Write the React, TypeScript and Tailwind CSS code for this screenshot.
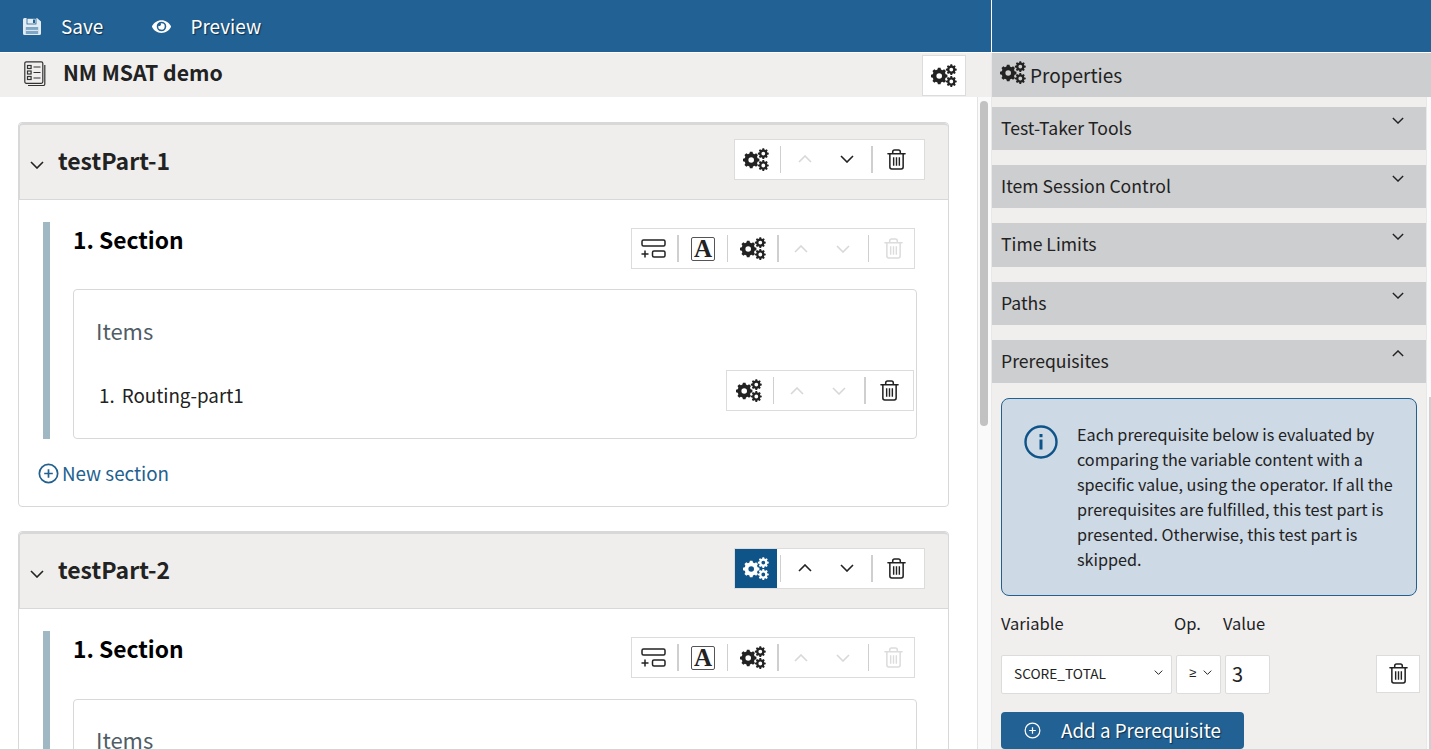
import { FaEye } from 'react-icons/fa'

// builds one toothed wheel as an svg path, with a round hole in the middle
function gearPath(cx: number, cy: number, outer: number, root: number, hole: number, teeth: number) {
  const step = (Math.PI * 2) / teeth
  let d = ''
  for (let i = 0; i < teeth; i++) {
    const a = i * step
    const pts: [number, number][] = [
      [root, a - step * 0.34],
      [outer, a - step * 0.2],
      [outer, a + step * 0.2],
      [root, a + step * 0.34],
    ]
    for (const [r, t] of pts) {
      d += `${i === 0 && r === root && t < a ? 'M' : 'L'}${(cx + r * Math.cos(t)).toFixed(2)} ${(cy + r * Math.sin(t)).toFixed(2)}`
    }
  }
  d += `Z M${cx - hole} ${cy}a${hole} ${hole} 0 1 0 ${hole * 2} 0a${hole} ${hole} 0 1 0 ${-hole * 2} 0Z`
  return d
}

const gearsD = [
  gearPath(8.2, 12, 8.3, 6.7, 2.8, 8),
  gearPath(20.3, 5.6, 5.5, 4.2, 1.9, 8),
  gearPath(20.3, 17.5, 5.5, 4.2, 1.9, 8),
].join(' ')

function Gears({ className = '' }: { className?: string }) {
  return (
    <svg viewBox="0 0 26 23" className={`h-[23px] w-[26px] ${className}`} fill="currentColor" fillRule="evenodd">
      <path d={gearsD} />
    </svg>
  )
}

function SaveIcon() {
  return (
    <svg viewBox="0 0 18 17" className="ml-[23px] h-[17px] w-[18px]">
      <path d="M1.5 0H14l4 3.5V15.5A1.5 1.5 0 0 1 16.5 17H1.5A1.5 1.5 0 0 1 0 15.5V1.5A1.5 1.5 0 0 1 1.5 0Z" fill="#e4ecf3" />
      <rect x="4" y="0.5" width="9" height="5.5" fill="#e4ecf3" stroke="#226193" strokeWidth="0.8" />
      <rect x="10" y="1.5" width="2" height="3.5" fill="#226193" />
      <rect x="2.8" y="9" width="12.4" height="7" fill="#7fa6c4" />
      <path d="M2.8 12.4h12.4" stroke="#e4ecf3" strokeWidth="1" />
    </svg>
  )
}

function Trash({ className = '' }: { className?: string }) {
  return (
    <svg viewBox="0 0 20 22" className={`h-[21px] w-[19px] ${className}`} fill="none" stroke="currentColor" strokeWidth="1.6">
      <path d="M1 5h18" strokeLinecap="round" />
      <path d="M6 5V3a2 2 0 0 1 2-2h4a2 2 0 0 1 2 2v2" />
      <path d="M3 5v14a2 2 0 0 0 2 2h10a2 2 0 0 0 2-2V5" />
      <path d="M7 8.5v9M10 8.5v9M13 8.5v9" strokeWidth="1.5" />
    </svg>
  )
}

function Chevron({ up = false, className = 'h-[8px] w-[14px]' }: { up?: boolean; className?: string }) {
  return (
    <svg viewBox="0 0 14 8" className={className} fill="none" stroke="currentColor" strokeWidth="1.6">
      <path d={up ? 'M1 7l6-6 6 6' : 'M1 1l6 6 6-6'} />
    </svg>
  )
}

function AddSectionIcon() {
  return (
    <svg viewBox="0 0 25 19" className="h-[19px] w-[25px] text-[#222]" fill="none" stroke="currentColor" strokeWidth="1.5">
      <rect x="1" y="1" width="23" height="6" rx="1.5" />
      <rect x="11.5" y="12" width="12.5" height="6" rx="1.5" />
      <path d="M0.5 15h7M4 11.5v7" />
    </svg>
  )
}

function ToolbarSep({ className }: { className: string }) {
  return <div className={`h-[27px] bg-[#cfcfcf] ${className}`} />
}

function PartToolbar({ active = false, upEnabled = true, small = false }: { active?: boolean; upEnabled?: boolean; small?: boolean }) {
  return (
    <div className={`flex h-[41px] items-center border border-[#dcdcdc] bg-white ${small ? 'w-[188px]' : 'w-[191px]'}`}>
      <div className={`flex h-full items-center justify-center ${small ? 'w-[43px]' : 'w-[42px]'} ${active ? 'bg-[#0f5489] text-white' : 'text-[#222]'}`}>
        <Gears />
      </div>
      <ToolbarSep className="ml-[3px] w-px" />
      <div className={`flex w-[42px] justify-center ${small ? 'ml-[2px]' : 'ml-[3px]'} ${upEnabled ? 'text-[#222]' : 'text-[#d8d8d8]'}`}>
        <Chevron up />
      </div>
      <div className={`flex w-[42px] justify-center ${small ? 'text-[#d8d8d8]' : 'text-[#222]'}`}>
        <Chevron />
      </div>
      <ToolbarSep className={small ? 'ml-[4px] w-[2px]' : 'ml-[3px] w-[2px]'} />
      <div className="flex w-[46px] justify-center text-[#222]">
        <Trash />
      </div>
    </div>
  )
}

function SectionToolbar() {
  return (
    <div className="flex h-[41px] w-[284px] items-center border border-[#dcdcdc] bg-white text-[#222]">
      <div className="flex w-[43px] justify-center">
        <AddSectionIcon />
      </div>
      <ToolbarSep className="ml-[2px] w-[2px]" />
      <div className="flex w-[48px] justify-center">
        <div className="flex h-[24px] w-[24px] items-center justify-center rounded-[2px] border border-[#555] font-['Liberation_Serif',serif] text-[25px] leading-none font-bold">
          A
        </div>
      </div>
      <ToolbarSep className="w-px" />
      <div className="flex w-[49px] justify-center">
        <Gears />
      </div>
      <ToolbarSep className="w-[2px]" />
      <div className="flex w-[44px] justify-center text-[#d8d8d8]">
        <Chevron up />
      </div>
      <div className="flex w-[40px] justify-center text-[#d8d8d8]">
        <Chevron />
      </div>
      <ToolbarSep className="ml-[5px] w-px" />
      <div className="flex w-[45px] justify-center pl-[3px] text-[#dcdcdc]">
        <Trash />
      </div>
    </div>
  )
}

function TestPart({ name, active = false, upEnabled = true, full = false }: { name: string; active?: boolean; upEnabled?: boolean; full?: boolean }) {
  return (
    <div className="w-[931px] shrink-0 rounded-[4px] border border-[#d8d8d8] bg-white">
      <div className="flex h-[77px] items-center rounded-t-[4px] border-t-2 border-b border-l border-[#d8d8d8] bg-[#efeeed] pr-[23px] pl-[10px]">
        <Chevron className="mt-[5px] h-[8px] w-[14px] text-[#222]" />
        <h2 className="mb-[5px] ml-[14px] text-[23px] leading-[32px] font-semibold text-[#222]">{name}</h2>
        <div className="mb-[6px] ml-auto">
          <PartToolbar active={active} upEnabled={upEnabled} />
        </div>
      </div>
      <div className="pt-[22px] pb-[19px]">
        <div className="ml-[24px] border-l-[7px] border-[#a0b8c3] pl-[23px]">
          <div className={`flex items-start justify-between pr-[33px] ${full ? 'h-[67px]' : 'h-[68px]'}`}>
            <h3 className="text-[22.8px] leading-[35px] font-semibold text-black">1. Section</h3>
            <div className="mt-[6px]">
              <SectionToolbar />
            </div>
          </div>
          <div className={`mr-[31px] h-[150px] rounded-[4px] border border-[#d8d8d8] pl-[22px] ${full ? 'pt-[25px]' : 'pt-[24px]'}`}>
            <div className="text-[22px] leading-[30px] text-[#4f5d66]">Items</div>
            <div className="mt-[25px] flex h-[41px] items-center justify-between pr-[2px]">
              <div className="pt-[8px] pl-[3px] text-[18.8px] leading-[26px] text-[#222]">
                <span className="mr-[7px]">1.</span>Routing-part1
              </div>
              {full && <PartToolbar small upEnabled={false} />}
            </div>
          </div>
        </div>
        <div className="mt-[20px] ml-[19px] flex h-[28px] items-center gap-[3px] text-[18.8px] text-[#22618f]">
          <svg viewBox="0 0 22 22" className="h-[21px] w-[21px]" fill="none" stroke="currentColor" strokeWidth="1.8">
            <circle cx="11" cy="11" r="9.6" />
            <path d="M6.5 11h9M11 6.5v9" />
          </svg>
          New section
        </div>
      </div>
    </div>
  )
}

function AccordionHeader({ title, open = false }: { title: string; open?: boolean }) {
  return (
    <div className="flex h-[43.2px] justify-between bg-[#cdced0] pr-[22px] pl-[9px] text-[17.6px] leading-[42px] text-[#222]">
      {title}
      <Chevron up={open} className="mt-[10px] h-[7px] w-[12px]" />
    </div>
  )
}

export default function App() {
  return (
    <div className="flex h-[750px] w-[1431px] flex-col overflow-hidden border-b border-[#d4d4d4] bg-white font-['Noto_Sans_CJK_SC','Noto_Sans',sans-serif]">
      <header className="flex h-[52px] shrink-0 bg-[#226193] text-[19px] text-white [text-shadow:1px_1px_1px_#0a3050]">
        <div className="flex w-[991px] items-center">
          <SaveIcon />
          <span className="ml-[20px]">Save</span>
          <FaEye className="ml-[48px] h-[17px] w-[21px]" />
          <span className="ml-[18px]">Preview</span>
        </div>
        <div className="w-px bg-white" />
      </header>

      <div className="flex min-h-0 flex-1 border-t border-white">
        <main className="flex w-[991px] flex-col">
          <div className="flex h-[44px] shrink-0 items-center bg-[#f0efee] pr-[25px] pl-[24px]">
            <svg viewBox="0 0 22 25" className="mb-[3px] h-[25px] w-[22px] text-[#333]" fill="none" stroke="currentColor" strokeWidth="1.2">
              <rect x="0.8" y="0.8" width="18" height="21.5" rx="1.5" />
              <path d="M20.8 4v19a1.5 1.5 0 0 1-1.5 1.5H4" />
              <rect x="3.5" y="4.5" width="3.6" height="3" />
              <rect x="3.5" y="10" width="3.6" height="3" />
              <rect x="3.5" y="15.5" width="3.6" height="3" />
              <path d="M9.5 6h7M9.5 11.5h7M9.5 17h7" />
            </svg>
            <h1 className="mb-[7px] ml-[17px] text-[21.2px] leading-[30px] font-semibold text-[#222]">NM MSAT demo</h1>
            <div className="ml-auto flex h-[41px] w-[44px] items-center justify-center border border-[#dcdcdc] bg-white text-[#222]">
              <Gears />
            </div>
          </div>
          <div className="flex min-h-0 flex-1">
            <div className="flex w-[978px] flex-col gap-[24px] overflow-hidden border-r border-[#e3e3e3] pt-[25px] pl-[18px]">
              <TestPart name="testPart-1" upEnabled={false} full />
              <TestPart name="testPart-2" active />
            </div>
            <div className="w-[13px] bg-[#fafafa] pt-[4px] pl-[2px]">
              <div className="h-[325px] w-[8px] rounded-full bg-[#c2c2c2]" />
            </div>
          </div>
        </main>

        <aside className="flex w-[440px] flex-col overflow-hidden border-l border-[#e8e8e8] bg-[#f0efee]">
          <div className="flex h-[44px] shrink-0 items-start bg-[#cdced0] pl-[8px] text-[#222]">
            <Gears className="mt-[8px]" />
            <span className="mt-[4px] ml-[4px] text-[19px] leading-[36px]">Properties</span>
          </div>
          <div className="flex min-h-0 flex-1">
            <div className="flex w-[434px] shrink-0 flex-col gap-[15px] pt-[10px]">
              <AccordionHeader title="Test-Taker Tools" />
              <AccordionHeader title="Item Session Control" />
              <AccordionHeader title="Time Limits" />
              <AccordionHeader title="Paths" />
              <div>
                <AccordionHeader title="Prerequisites" open />
                <div className="px-[9px] pt-[15px]">
                  <div className="flex h-[198px] w-[416px] rounded-[8px] border border-[#22618f] bg-[#cdd9e5] pt-[24px] pl-[22px]">
                    <svg viewBox="0 0 34 34" className="mt-[2px] h-[34px] w-[34px] shrink-0 text-[#0f5489]" fill="none" stroke="currentColor">
                      <circle cx="17" cy="17" r="15.5" strokeWidth="2.4" />
                      <rect x="15.5" y="14.5" width="3" height="10" fill="currentColor" stroke="none" />
                      <rect x="15.5" y="9" width="3" height="3.2" fill="currentColor" stroke="none" />
                    </svg>
                    <p className="-mt-[1px] ml-[19px] w-[320px] text-[16.2px] leading-[25.1px] text-[#222]">
                      Each prerequisite below is evaluated by comparing the variable content with a specific value, using the
                      operator. If all the prerequisites are fulfilled, this test part is presented. Otherwise, this test part
                      is skipped.
                    </p>
                  </div>
                  <div className="mt-[15px] flex h-[26px] items-center pb-[2px] text-[16.5px] text-[#222]">
                    <span className="w-[173px]">Variable</span>
                    <span className="w-[49px]">Op.</span>
                    <span>Value</span>
                  </div>
                  <div className="mt-[18px] flex w-[419px] items-start">
                    <div className="flex h-[39px] w-[171px] items-center justify-between rounded-[2px] border border-[#dcdcdc] bg-white pr-[8px] pb-[3px] pl-[12px] text-[13.7px] text-[#222]">
                      SCORE_TOTAL
                      <Chevron className="h-[5px] w-[9px]" />
                    </div>
                    <div className="ml-[4px] flex h-[39px] w-[45px] items-center justify-between rounded-[2px] border border-[#dcdcdc] bg-white pr-[8px] pb-[3px] pl-[12px] font-['Liberation_Sans',sans-serif] text-[13px] text-[#222]">
                      ≥
                      <Chevron className="h-[5px] w-[9px]" />
                    </div>
                    <div className="ml-[4px] flex h-[39px] w-[45px] items-center rounded-[2px] border border-[#dcdcdc] bg-white pl-[6px] text-[20px] text-[#222]">
                      3
                    </div>
                    <div className="ml-auto flex h-[38px] w-[44px] items-center justify-center border border-[#dcdcdc] bg-white text-[#222]">
                      <Trash />
                    </div>
                  </div>
                  <div className="mt-[18px] flex h-[37px] w-[243px] items-center rounded-[4px] bg-[#226193] pl-[23px] text-[18.8px] text-white [text-shadow:1px_1px_1px_#0a3050]">
                    <svg viewBox="0 0 18 18" className="h-[17px] w-[17px]" fill="none" stroke="currentColor" strokeWidth="1.3">
                      <circle cx="9" cy="9" r="7.8" />
                      <path d="M5.5 9h7M9 5.5v7" />
                    </svg>
                    <span className="ml-[20px]">Add a Prerequisite</span>
                  </div>
                </div>
              </div>
            </div>
            <div className="flex w-[5px] justify-end border-l border-[#e8e8e8] bg-[#fafafa] pt-[300px]">
              <div className="h-full w-[2px] bg-[#d0d0d0]" />
            </div>
          </div>
        </aside>
      </div>
    </div>
  )
}
